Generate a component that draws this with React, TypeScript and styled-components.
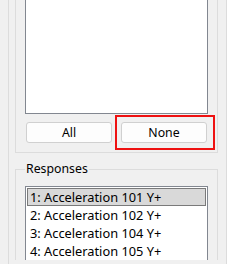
import React from "react";
import styled, { createGlobalStyle } from "styled-components";

const Global = createGlobalStyle`
  html, body { margin: 0; padding: 0; background: #f0f0f0; overflow: hidden; }
  body { font-family: "Noto Sans", "DejaVu Sans", sans-serif; font-size: 12px; color: #000; }
  * { box-sizing: border-box; }
`;

const Panel = styled.div`
  margin-left: 8px;
  width: 219px;
  height: 264px;
  border-left: 1px solid #dcdcdc;
  border-right: 1px solid #dcdcdc;
  padding-left: 6px;
`;

const Group = styled.div`
  width: 203px;
  border: 1px solid #dcdcdc;
  border-top: none;
  padding: 0 0 9px 9px;
`;

const ListBox = styled.div<{ $open?: "top" | "bottom" }>`
  width: 183px;
  height: ${(p) => (p.$open === "top" ? "114px" : "auto")};
  background: #fff;
  border: 1px solid #828790;
  ${(p) => (p.$open === "top" ? "border-top: none;" : "border-bottom: none;")}
  padding: ${(p) => (p.$open === "top" ? "0" : "1px 1px 0 1px")};
`;

const ButtonRow = styled.div`
  display: flex;
  gap: 9px;
  margin: 8px 0 0 1px;
  width: 181px;
`;

const Slot = styled.div`
  position: relative;
  flex: 1;
  display: flex;
`;

const Button = styled.button`
  flex: 1;
  height: 21px;
  padding: 0;
  background: #fdfdfd;
  border: 1px solid #d0d0d0;
  border-radius: 3px;
  font-family: inherit;
  font-size: 12.3px;
  color: #000;
  line-height: 19px;
`;

const Highlight = styled.div`
  position: absolute;
  inset: -7px -8px -7px -6px;
  border: 2px solid #ee1111;
  pointer-events: none;
`;

const Fieldset = styled.fieldset`
  margin: 8px 0 0 0;
  width: 203px;
  border: 1px solid #dcdcdc;
  border-bottom: none;
  padding: 9px 0 0 9px;
  min-width: 0;
`;

const Legend = styled.legend`
  padding: 0 1px;
  line-height: 16px;
  font-size: 12.3px;
`;

const Item = styled.div<{ $selected?: boolean }>`
  height: 18px;
  line-height: 16px;
  padding-left: 2px;
  font-size: 12.8px;
  white-space: nowrap;
  border: 1px solid ${(p) => (p.$selected ? "#7a7a7a" : "transparent")};
  background: ${(p) => (p.$selected ? "#d9d9d9" : "transparent")};
`;

const responses = [
  "1: Acceleration 101 Y+",
  "2: Acceleration 102 Y+",
  "3: Acceleration 104 Y+",
  "4: Acceleration 105 Y+",
];

export default function App() {
  return (
    <>
      <Global />
      <Panel>
        <Group>
          <ListBox $open="top" />
          <ButtonRow>
            <Slot>
              <Button>All</Button>
            </Slot>
            <Slot>
              <Button>None</Button>
              <Highlight />
            </Slot>
          </ButtonRow>
        </Group>
        <Fieldset>
          <Legend>Responses</Legend>
          <ListBox $open="bottom">
            {responses.map((r, i) => (
              <Item key={r} $selected={i === 0}>
                {r}
              </Item>
            ))}
          </ListBox>
        </Fieldset>
      </Panel>
    </>
  );
}
